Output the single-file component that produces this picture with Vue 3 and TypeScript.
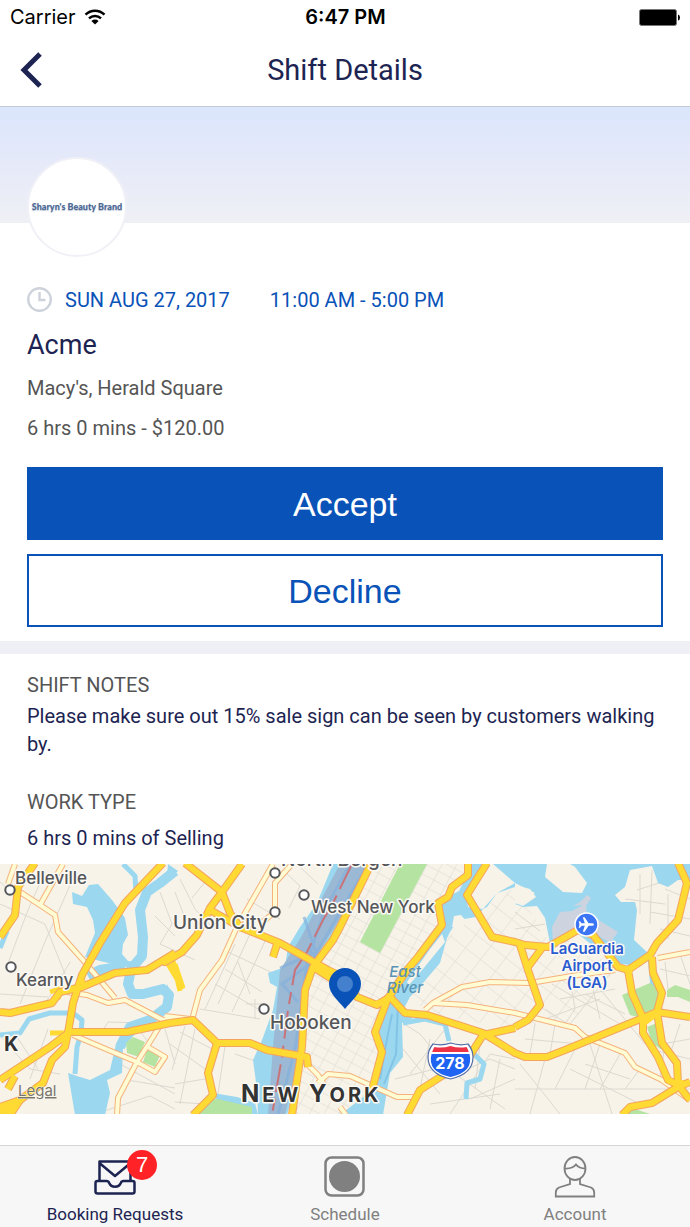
<script setup lang="ts">
interface Label {
  text: string
  x: number
  y: number
  large?: boolean
}

interface Point {
  x: number
  y: number
}

const brand = "Sharyn's Beauty Brand"

const shift = {
  date: 'SUN AUG 27, 2017',
  time: '11:00 AM - 5:00 PM',
  client: 'Acme',
  place: "Macy's, Herald Square",
  pay: '6 hrs 0 mins - $120.00',
  notes: 'Please make sure out 15% sale sign can be seen by customers walking by.',
  work: '6 hrs 0 mins of Selling',
}

const pendingRequests = 7

const water: string[] = [
  'M72 28 82 32 89 21 98 20 112 36 125 54 128 71 123 80 122 90 128 97 140 98 125 103 100 97 85 93 95 69 93 56 87 43 73 40Z',
  'M68 209 80 213 90 216 110 206 116 180 128 163 135 170 123 183 122 209 107 216 110 229 105 251 75 251Z',
  'M333 0H373L340 60 335 76 305 123 300 183 293 229 287 251H258L257 226 253 196 262 176 273 146 277 123 270 119 268 109 285 103 288 83 300 63 317 39Z',
  'M470 0H482L467 33 468 43 483 45 487 43 497 29 515 23 515 19 493 0H478 690V16L678 16 668 23 658 19 652 2 630 6 625 23 615 31 621 38 635 38 637 46 634 76 648 89 630 101 615 99 578 70 550 79 545 54 537 42 523 43 515 40 535 29 515 19 497 29 483 45 476 53 458 56 450 68 447 74 440 99 423 119 410 133 403 146 413 154 402 159 403 193 390 209 383 251H340L372 226 383 189 375 169 385 139 407 103 433 73 442 63 440 39 450 29Z',
  'M213 229 237 233 255 239 258 251H225Z',
  'M168 0 178 7 172 13 167 11Z',
  'M167 120 172 131 167 145Z',
]

const islands: string[] = [
  'M547 0 545 13 563 28 582 29 587 19 575 3 570 0Z',
  'M457 14 464 17 459 27 451 31 457 20Z',
  'M454 52 461 51 466 57 463 63 452 63Z',
  'M442 70 445 78 423 105 409 121 407 118 430 85Z',
  'M515 21 530 25 536 33 523 42 515 39Z',
]

const rivers: string[] = [
  'M175 7 160 19 147 28 140 46 143 73 142 92 131 105 128 120 132 130 143 130 163 125 169 131 167 143 150 156 130 163 120 183',
  'M88 112 100 106 125 102',
]

const creeks: string[] = [
  'M123 0 135 12 136 29',
  'M0 171 20 169 29 155 50 149 73 149 82 156 81 170 77 183 75 210',
  'M403 159 425 155 445 160 449 177',
  'M474 190 484 200 480 215 467 219 466 235',
  'M650 92 653 124',
  'M0 84 7 67',
]

const parks: string[] = [
  'M400 0H427L380 89 360 78Z',
  'M126 179 133 173 145 178 139 193 127 189Z',
  'M147 186 160 191 155 203 143 198Z',
  'M622 131 650 119 660 126 658 143 638 153 630 151Z',
  'M647 163 657 159 662 186 652 179Z',
  'M667 126 675 121 690 126V138L678 133 667 133Z',
  'M213 234 252 243V251H190Z',
  'M622 251 635 245 650 250Z',
]

const lanes: string[] = [
  'M0 40 45 60 65 110M45 8 28 46 7 102M75 10 44 80 20 140M0 18 18 34M0 130 48 133M70 98 45 140M0 172 30 205 60 210M15 170 38 205M48 165 30 215M100 171 108 158 145 159M95 250 150 232 175 245M120 200 175 230M135 160 148 178M127 216 175 224M165 165 175 200',
  'M160 28 172 60 160 80 195 96M180 15 195 45 215 66M192 34 205 18M175 28 188 62M155 52 175 72M235 80 205 145M250 70 218 140M266 75 232 148M225 105 262 128M215 120 258 145M228 88 275 110M200 145 260 155M255 135V155M246 140H264M285 8 300 22 289 44M300 3 318 20M247 35 280 55M238 98 250 130M180 168 212 185M170 180 205 205M185 162 172 206M175 220 205 215M225 182 218 230M235 190 258 198M175 238 205 240M195 165 180 240',
  'M404 160 420 170 445 200M410 210 445 165M403 185 440 230M395 215 435 205M430 175 420 225M445 215 490 195 515 205M480 180 475 225M470 235 515 215M430 240 500 230M450 250 490 190 515 195M455 210 505 245M500 195 490 245',
  'M515 65 545 60M515 48 540 67M640 10V50M652 6 650 60M625 35 665 40M668 30V75M650 48 690 55M660 65 690 72M665 25 690 35M637 26 662 18M570 115 575 145 565 160M590 112 600 155M560 135 615 125M552 120 620 160M545 145 590 175M610 110 570 160M585 130 625 150M600 125 645 180M545 155 600 135M680 90 690 120M665 98 668 125M660 105 690 112',
  'M520 200 560 250M515 225H690M545 195 530 250M575 185 555 225M590 180 612 250M600 180 585 225M620 190 600 225M585 200 630 215M570 205 640 240M525 175 580 180M535 160 530 190M555 160 550 190M640 205 625 225M650 185 690 195M665 180 660 215M680 160 670 190M690 175 662 180',
]

const minorRoads: string[] = [
  'M15 0 8 20',
  'M20 28 40 41 55 51 58 68 83 96 115 134',
  'M63 0 40 41',
  'M67 128 87 131 108 139 125 136 163 156 175 155',
  'M73 171 113 188 137 198 153 173 163 156',
  'M117 251 118 234 137 198 155 208 165 193 148 183',
  'M273 0 237 63 222 96 200 126 192 156',
  'M292 0 275 19V48L260 60',
  'M165 152 190 155',
  'M303 196 318 211 325 222M318 219 328 210 350 212 397 233 413 233',
  'M340 243 346 251',
  'M425 146 433 139 462 123 490 118 530 119 578 111 615 106',
  'M433 139 467 141 515 149 575 164 585 173 625 189 635 203 662 216 690 236',
  'M658 94 690 88',
]

const majorRoads: string[] = [
  'M35 -1 18 23 15 51 0 73',
  'M163 -1 125 39 100 79 82 111 73 139 68 169 65 183 52 196 43 219 20 236 0 243',
  'M175 89 147 106 115 109 82 123 60 128 52 139 10 149 0 148',
  'M170 159 127 168 70 168 50 183 0 216',
  'M20 236 10 251M8 225 15 212',
  'M185 -1 222 28 230 49 240 63 280 79 328 106 345 114 357 133 377 141 390 133 405 149 427 151 483 169 515 189 525 193 547 193 565 186 638 156 657 148 690 153',
  'M242 0 222 28 210 44 197 71 182 88 165 98 175 89M210 46 240 63',
  'M277 80 273 93',
  'M371 0 340 63 333 76 313 103 305 126 302 183 298 209 292 251M313 103 340 120',
  'M170 159 193 156 217 179 250 179 267 186 307 193 308 203',
  'M217 179 208 209 213 231 193 251',
  'M468 -1V11L452 23 448 33 438 39 442 61 418 93 407 106 388 134 375 168 382 188 372 226',
  'M487 -1 467 31 492 73 515 78 525 81 548 83 578 66 593 71 618 103 628 106 650 91 657 79 678 56 687 19 678 -1',
  'M515 164 483 171 467 196 420 226 407 251',
  'M515 163 528 156 540 141 528 106 520 81M528 103 542 84',
  'M628 106 632 129 643 154V169L658 193 668 216 678 221 690 236',
  'M652 93 653 109 662 129 657 148 662 179 677 199 678 221',
  'M622 251 630 243 652 239 678 223 690 218',
]

const towns: Label[] = [
  { text: 'Belleville', x: 15, y: 20 },
  { text: 'Kearny', x: 16, y: 122 },
  { text: 'Union City', x: 173, y: 65, large: true },
  { text: 'West New York', x: 311, y: 49 },
  { text: 'Hoboken', x: 270, y: 165, large: true },
  { text: 'North Bergen', x: 281, y: 2, large: true },
]

const townDots: Point[] = [
  { x: 10, y: 26 },
  { x: 11, y: 103 },
  { x: 275, y: 9 },
  { x: 304, y: 31 },
  { x: 275, y: 48 },
  { x: 264, y: 145 },
]
</script>

<template>
  <div class="screen">
    <div class="status">
      <div class="carrier">
        <span>Carrier</span>
        <svg class="wifi" viewBox="0 0 22 16" aria-hidden="true">
          <path d="M1.5 5.6a13.5 13.5 0 0 1 19 0M5 9.4a8.6 8.6 0 0 1 12 0" fill="none" stroke="#000" stroke-width="2.4" />
          <path d="M7.4 12a5.2 5.2 0 0 1 7.2 0L11 15.6Z" fill="#000" />
        </svg>
      </div>
      <span class="clock">6:47 PM</span>
      <svg class="battery" viewBox="0 0 42 17" aria-hidden="true">
        <rect x="0.5" y="0.5" width="37" height="16" rx="2" fill="#000" stroke="#777" />
        <path d="M39 5.5q2 .5 2 3t-2 3Z" fill="#000" />
      </svg>
    </div>

    <header class="nav">
      <button class="back" type="button" aria-label="Back">
        <svg viewBox="0 0 22 36" aria-hidden="true">
          <path d="M20 2 4 18 20 34" fill="none" stroke="#1d2452" stroke-width="5" />
        </svg>
      </button>
      <h1>Shift Details</h1>
    </header>

    <main>
      <div class="banner"></div>
      <section class="summary">
        <div class="avatar"><span>{{ brand }}</span></div>
        <div class="when">
          <svg class="clock-icon" viewBox="0 0 26 26" aria-hidden="true">
            <circle cx="12.5" cy="12.5" r="11.3" fill="none" stroke="#ced3db" stroke-width="2.4" />
            <path d="M12.5 5V13H18.5" fill="none" stroke="#ced3db" stroke-width="2.4" />
          </svg>
          <span class="date">{{ shift.date }}</span>
          <span>{{ shift.time }}</span>
        </div>
        <h2>{{ shift.client }}</h2>
        <p class="detail place">{{ shift.place }}</p>
        <p class="detail">{{ shift.pay }}</p>
        <div class="actions">
          <button class="action accept" type="button">Accept</button>
          <button class="action decline" type="button">Decline</button>
        </div>
      </section>

      <section class="notes">
        <h3>SHIFT NOTES</h3>
        <p>{{ shift.notes }}</p>
        <h3 class="work-title">WORK TYPE</h3>
        <p class="work">{{ shift.work }}</p>
      </section>

      <svg class="map" viewBox="0 0 690 250" preserveAspectRatio="xMidYMid slice" role="img" aria-label="Map of New York">
        <defs>
          <pattern id="midtown" width="13" height="10" patternUnits="userSpaceOnUse" patternTransform="rotate(28)">
            <path d="M0 0H13M0 0V10" class="grid" />
          </pattern>
          <pattern id="queens" width="19" height="17" patternUnits="userSpaceOnUse" patternTransform="rotate(38)">
            <path d="M0 0H19M0 0V17" class="grid" />
          </pattern>
        </defs>
        <rect width="690" height="250" fill="#f7f3e9" />
        <path d="M373 0H468V11L438 39 442 61 388 134 375 168 382 188 372 226 340 250H290L305 123 340 62Z" fill="url(#midtown)" />
        <path d="M483 45 515 23 550 79 578 70 615 106 580 150 515 165 430 150 410 133 447 74Z" fill="url(#queens)" />
        <path v-for="d in lanes" :key="d" :d="d" class="lane" />
        <path v-for="d in water" :key="d" :d="d" class="water" />
        <path v-for="d in rivers" :key="d" :d="d" class="river" />
        <path v-for="d in creeks" :key="d" :d="d" class="creek" />
        <path v-for="d in islands" :key="d" :d="d" fill="#f7f3e9" />
        <path v-for="d in parks" :key="d" :d="d" fill="#b5e3a1" />
        <path d="M552 63 560 48 572 47 583 41 573 42 580 38 587 31 591 34 586 42 587 49 618 68 610 79 590 66 578 68 553 79Z" fill="#cdd3df" />
        <path d="M340 0H373L333 66 312 99 303 123 298 196 285 251H268L273 183 280 106 300 75Z" fill="#9bb9d4" />
        <path d="M350 0 325 45 307 98 296 180 278 251M368 0 310 100 282 120 298 138M304 53 316 88 280 104" fill="none" stroke="#85b1dc" stroke-width="3" opacity="0.7" />
        <path d="M392 150 386 180 380 215M398 140 396 190 384 220" fill="none" stroke="#83c4e6" stroke-width="2" />
        <path d="M352 0 333 39 323 56 307 88 295 106 288 146 282 193 272 251" class="border" />

        <path v-for="d in minorRoads" :key="'case' + d" :d="d" class="minor-case" />
        <path v-for="d in minorRoads" :key="d" :d="d" class="minor" />
        <path d="M175 100 183 124M168 100 183 125M50 128 62 124 58 135M50 169H75M173 97 180 127" class="ramp" />
        <path v-for="d in majorRoads" :key="'case' + d" :d="d" class="major-case" />
        <path v-for="d in majorRoads" :key="d" :d="d" class="major" />
        <path d="M60 176 72 169 66 184ZM76 118 86 116 76 132ZM0 240 20 234 14 250H0ZM638 152 662 147 654 155 645 162ZM618 101 634 103 630 113ZM670 216 684 216 682 224ZM369 138 390 134 380 142ZM476 167 490 169 484 175ZM235 56 246 64 240 68Z" class="junction" />

        <circle v-for="p in townDots" :key="p.x + '-' + p.y" :cx="p.x" :cy="p.y" r="4.7" class="dot" />
        <text v-for="t in towns" :key="t.text" :x="t.x" :y="t.y" class="town" :class="{ large: t.large }">{{ t.text }}</text>
        <text x="4" y="187" class="city">K</text>
        <text x="241" y="238" class="city caps"><tspan class="initial">N</tspan>EW <tspan class="initial">Y</tspan>ORK</text>
        <text x="405" y="113" class="sea">East</text>
        <text x="405" y="129" class="sea">River</text>

        <circle cx="586.5" cy="60.5" r="11.5" fill="#3b75f6" stroke="#fff" stroke-width="1.5" />
        <path d="M594 60.5q-.4-1.2-2-1.2h-3.4l-4-6h-1.8l2 6h-3.3l-1.5-2h-1.3l.8 3.2-.8 3.2h1.3l1.5-2h3.3l-2 6h1.8l4-6h3.4q1.6 0 2-1.2Z" fill="#fff" />
        <text x="587" y="90" class="airport">LaGuardia</text>
        <text x="587" y="107" class="airport">Airport</text>
        <text x="587" y="124" class="airport">(LGA)</text>

        <path d="M433 180q9 2 17.5-1 9 3 17.5 1 5 6 5 13 0 17-22.5 22-22.5-5-22.5-22 0-7 5-13Z" fill="#fff" stroke="#526ca8" stroke-width="1.2" />
        <path d="M434.5 183q8 1.5 16-1 8 2.5 16 1 1.500 2 2.300 5h-36.600q.8-3 2.300-5Z" fill="#ef3346" />
        <path d="M431.5 190h38q4.5 18-19 23-23.500-5-19-23Z" fill="#1f63f2" />
        <text x="450" y="205" class="shield">278</text>

        <path d="M345 145C339 137 329 130 329 120a16 16 0 0 1 32 0c0 10-10 17-16 25Z" fill="#0952b8" />
        <circle cx="345" cy="120" r="8" fill="#4580ce" />
        <text x="18" y="232" class="legal">Legal</text>
      </svg>
    </main>

    <nav class="tabs" aria-label="Main">
      <a class="tab active" href="#requests" aria-current="page">
        <span class="icon">
          <svg viewBox="0 0 42 42" aria-hidden="true">
            <g fill="none" stroke="#1d2452" stroke-width="2.5" stroke-linejoin="round">
              <path d="M5.5 24V5.5H36.5V24M6 7.5 21 20 36 7.5" />
              <path d="M3.5 25H12.5Q14.5 25 15.2 27 16.8 30.8 21 30.8T26.8 27Q27.5 25 29.5 25H38.5Q40.5 25 40.5 27V35.5Q40.5 37.5 38.5 37.5H3.5Q1.5 37.5 1.5 35.5V27Q1.5 25 3.5 25Z" />
            </g>
          </svg>
          <span class="badge">{{ pendingRequests }}</span>
        </span>
        <span>Booking Requests</span>
      </a>
      <a class="tab" href="#schedule">
        <span class="icon">
          <svg viewBox="0 0 42 42" aria-hidden="true">
            <rect x="1.5" y="1.5" width="38" height="38" rx="6" fill="none" stroke="#808080" stroke-width="2.5" />
            <circle cx="20.5" cy="20.5" r="15.5" fill="#808080" />
          </svg>
        </span>
        <span>Schedule</span>
      </a>
      <a class="tab" href="#account">
        <span class="icon">
          <svg viewBox="0 0 42 42" aria-hidden="true">
            <g fill="none" stroke="#808080" stroke-width="1.8">
              <ellipse cx="21" cy="12.5" rx="10.5" ry="11.5" />
              <path d="M10.5 12.5Q18.5 13 22 8.5 25 12.5 31.5 12.5M16 22.5V28L5 31.5Q1.8 33 1.8 36.5V40.5H40.2V36.5Q40.2 33 37 31.5L26 28V22.5" />
            </g>
          </svg>
        </span>
        <span>Account</span>
      </a>
    </nav>
  </div>
</template>

<style>
body {
  margin: 0;
  background: #fff;
}
</style>

<style scoped>
.screen {
  display: flex;
  flex-direction: column;
  min-height: 100vh;
  background: #fff;
  color: #1d2452;
  font-family: Roboto, "Liberation Sans", sans-serif;
}

h1,
h2,
h3,
p {
  margin: 0;
  font-weight: 400;
}

.status {
  display: grid;
  grid-template-columns: 1fr auto 1fr;
  align-items: center;
  height: 34px;
  padding: 0 9px 0 10px;
  color: #000;
  font-family: Inter, "Liberation Sans", sans-serif;
  font-size: 20px;
}

.carrier {
  display: flex;
  align-items: center;
  gap: 8px;
}

.wifi {
  width: 22px;
  height: 16px;
}

.clock {
  font-weight: 600;
}

.battery {
  justify-self: end;
  width: 42px;
  height: 17px;
}

.nav {
  display: grid;
  grid-template-columns: 64px 1fr 64px;
  align-items: center;
  height: 72px;
  border-bottom: 1px solid #c5c9d3;
}

.nav h1 {
  font-size: 29px;
  line-height: 36px;
  text-align: center;
}

.back {
  display: flex;
  padding: 0 0 0 20px;
  border: 0;
  background: none;
}

.back svg {
  width: 22px;
  height: 36px;
}

.banner {
  height: 116px;
  background: linear-gradient(#dae6fb, #e3e8fa 35%, #eff0f5);
}

.summary {
  padding: 0 27px 14px;
  border-bottom: 13px solid #eff0f6;
}

.avatar {
  display: flex;
  align-items: center;
  justify-content: center;
  box-sizing: border-box;
  width: 100px;
  height: 100px;
  margin-top: -66px;
  overflow: hidden;
  border: 2px solid #f0f0f7;
  border-radius: 50%;
  background: #fff;
  color: #4c6895;
  font: 900 9px/14px Lato, "Open Sans", sans-serif;
  text-shadow: 0 1px 1px #b5bdcc;
  white-space: nowrap;
}

.when {
  display: flex;
  align-items: center;
  height: 30px;
  margin-top: 28px;
  color: #0952b8;
  font-size: 20px;
}

.clock-icon {
  width: 26px;
  height: 26px;
  margin-right: 12px;
}

.date {
  margin-right: 40px;
}

h2 {
  margin-top: 12px;
  font-size: 27px;
  line-height: 36px;
}

.detail {
  margin-top: 12px;
  color: #555;
  font-size: 20px;
  line-height: 28px;
}

.place {
  margin-top: 11px;
}

.actions {
  display: grid;
  gap: 14px;
  margin-top: 25px;
}

.action {
  height: 73px;
  padding: 2px 0 0;
  border: 2px solid #0952b8;
  border-radius: 0;
  font-family: "Liberation Sans", sans-serif;
  font-size: 34px;
}

.accept {
  background: #0952b8;
  color: #fff;
}

.decline {
  background: #fff;
  color: #0952b8;
}

.notes {
  padding: 17px 27px 12px;
  font-size: 20px;
  line-height: 28px;
}

h3 {
  color: #555;
  font-size: 20px;
  line-height: 28px;
}

.notes p {
  margin-top: 3px;
}

.notes .work-title {
  margin-top: 30px;
}

.notes .work {
  margin-top: 8px;
}

.map {
  display: block;
  width: 100%;
  height: 250px;
  font-family: Inter, "Liberation Sans", sans-serif;
}

.map text {
  paint-order: stroke;
  stroke: #fbf9f3;
  stroke-width: 3px;
  stroke-linejoin: round;
}

.grid,
.lane {
  fill: none;
  stroke: #dcd9d1;
  stroke-width: 1px;
}

.water {
  fill: #9bd8ef;
}

.river,
.creek {
  fill: none;
  stroke: #9bd8ef;
  stroke-width: 10px;
  stroke-linejoin: round;
}

.creek {
  stroke-width: 5px;
}

.border {
  fill: none;
  stroke: #c8737a;
  stroke-width: 2px;
  stroke-dasharray: 28 7 12 7;
}

.minor-case,
.minor,
.major-case,
.major,
.ramp {
  fill: none;
  stroke-linejoin: round;
}

.minor-case {
  stroke: #f5b37d;
  stroke-width: 6px;
}

.minor {
  stroke: #fffbd3;
  stroke-width: 4px;
}

.major-case {
  stroke: #f4a45e;
  stroke-width: 8px;
}

.major {
  stroke: #ffda32;
  stroke-width: 6px;
}

.ramp {
  stroke: #ffda32;
  stroke-width: 5px;
}

.junction {
  fill: #ffda32;
}

.dot {
  fill: #fff;
  stroke: #55565a;
  stroke-width: 2px;
}

.town {
  fill: #55565a;
  font-size: 17px;
  font-weight: 500;
}

.large {
  font-size: 19px;
}

.city {
  fill: #333;
  font-size: 20px;
  font-weight: 700;
}

.caps {
  letter-spacing: 3px;
}

.initial {
  font-size: 24px;
}

.map .sea {
  fill: #5a93b5;
  stroke: none;
  font-size: 15px;
  font-style: italic;
  font-weight: 500;
  text-anchor: middle;
}

.airport {
  fill: #2a5bd0;
  font-size: 15px;
  font-weight: 600;
  text-anchor: middle;
}

.map .shield {
  fill: #fff;
  stroke: none;
  font-size: 16px;
  font-weight: 700;
  text-anchor: middle;
}

.map .legal {
  fill: #77746c;
  stroke-width: 1px;
  font-size: 15px;
  text-decoration: underline;
}

.tabs {
  display: grid;
  grid-template-columns: repeat(3, 1fr);
  height: 81px;
  margin-top: auto;
  border-top: 1px solid #d5d5d5;
  background: #f7f7f7;
}

.tab {
  display: flex;
  flex-direction: column;
  align-items: center;
  gap: 5px;
  padding-top: 10px;
  color: #808080;
  font-size: 17px;
  line-height: 22px;
  text-decoration: none;
}

.tab.active {
  color: #1d2452;
}

.icon {
  position: relative;
  width: 42px;
  height: 42px;
}

.icon svg {
  display: block;
}

.badge {
  position: absolute;
  top: -6px;
  left: 33px;
  width: 30px;
  height: 30px;
  border-radius: 50%;
  background: #ff2327;
  color: #fff;
  font-family: "Liberation Sans", sans-serif;
  font-size: 22px;
  line-height: 30px;
  text-align: center;
}
</style>
